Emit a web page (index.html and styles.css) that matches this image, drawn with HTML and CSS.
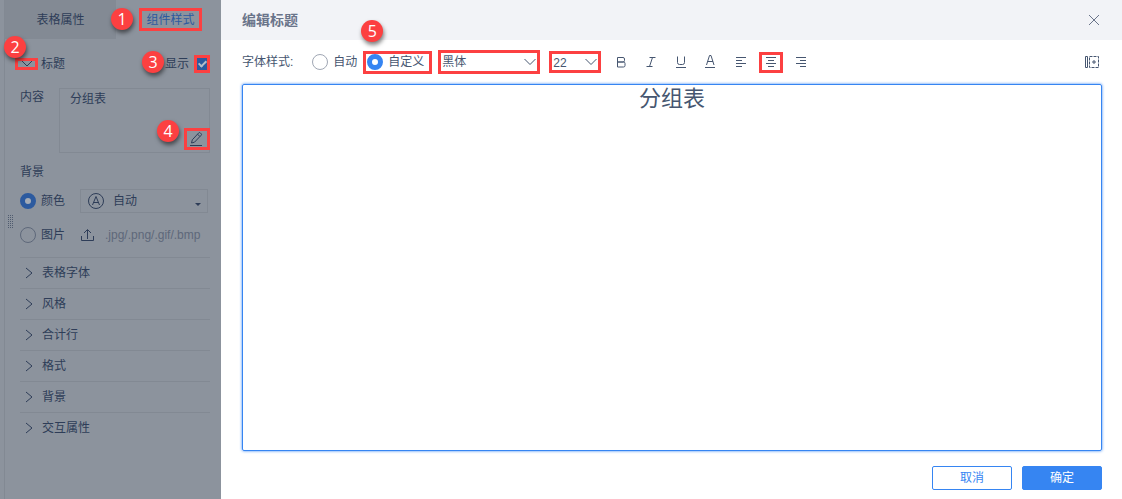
FILE: index.html
```html
<!DOCTYPE html>
<html lang="zh-CN">

<head>
  <meta charset="UTF-8">
  <meta name="viewport" content="width=device-width, initial-scale=1.0">
  <title>编辑标题</title>
  <link rel="stylesheet" href="styles.css">
</head>

<body>
  <aside class="sidebar">
    <nav class="tabs">
      <button class="tab" type="button">表格属性</button>
      <button class="tab active" type="button">
        <span class="mark mark-tab">组件样式<b class="badge badge-left">1</b></span>
      </button>
    </nav>
    <div class="grip"></div>

    <div class="section">
      <div class="section-head">
        <button class="mark mark-arrow" type="button" aria-label="标题">
          <svg width="17" height="6" viewBox="0 0 17 6"><path d="M4 0l5 5 5-5" /></svg>
          <b class="badge badge-top">2</b>
        </button>
        <span class="section-name">标题</span>
        <label for="showTitle">显示</label>
        <span class="mark mark-check">
          <input type="checkbox" id="showTitle" checked>
          <b class="badge badge-far">3</b>
        </span>
      </div>

      <div class="content-row">
        <label for="content">内容</label>
        <div class="content-box">
          <textarea id="content">分组表</textarea>
          <button class="mark mark-edit" type="button" aria-label="编辑">
            <svg width="16" height="16" viewBox="0 0 16 16"><path d="M2.500 12l.8-3.200L9.800 1.800a1 1 0 0 1 1.400 0l1 1a1 1 0 0 1 0 1.400L5.500 11.200zM8.600 3.200l2.300 2.300M1 14.500h12" /></svg>
            <b class="badge badge-edit">4</b>
          </button>
        </div>
      </div>

      <div class="sub-title">背景</div>
      <div class="bg-row">
        <label class="choice"><input type="radio" name="bg" checked>颜色</label>
        <div class="color-select">
          <svg class="auto-icon" width="16" height="16" viewBox="0 0 16 16"><circle cx="8" cy="8" r="7.500" /><path d="M4.500 12L8 3.500l3.500 8.500M5.800 9.500h4.400" /></svg>
          <select aria-label="颜色">
            <option>自动</option>
          </select>
          <i class="caret"></i>
        </div>
      </div>
      <div class="bg-row">
        <label class="choice"><input type="radio" name="bg">图片</label>
        <button class="upload" type="button">
          <svg width="14" height="14" viewBox="0 0 14 14"><path d="M7.500 11V2M4 5l3.500-3.500L11 5M1.500 8v4.500h12V8" /></svg>
          .jpg/.png/.gif/.bmp
        </button>
      </div>

      <ul class="groups">
        <li><button type="button"><svg width="8" height="12" viewBox="0 0 8 12"><path d="M1 1l6 5-6 5" /></svg>表格字体</button></li>
        <li><button type="button"><svg width="8" height="12" viewBox="0 0 8 12"><path d="M1 1l6 5-6 5" /></svg>风格</button></li>
        <li><button type="button"><svg width="8" height="12" viewBox="0 0 8 12"><path d="M1 1l6 5-6 5" /></svg>合计行</button></li>
        <li><button type="button"><svg width="8" height="12" viewBox="0 0 8 12"><path d="M1 1l6 5-6 5" /></svg>格式</button></li>
        <li><button type="button"><svg width="8" height="12" viewBox="0 0 8 12"><path d="M1 1l6 5-6 5" /></svg>背景</button></li>
        <li><button type="button"><svg width="8" height="12" viewBox="0 0 8 12"><path d="M1 1l6 5-6 5" /></svg>交互属性</button></li>
      </ul>
    </div>
  </aside>

  <main class="dialog">
    <header class="dialog-head">
      <h1>编辑标题</h1>
      <button type="button" aria-label="关闭">
        <svg width="16" height="16" viewBox="0 0 16 16"><path d="M3 3l10 10M13 3L3 13" /></svg>
      </button>
    </header>

    <div class="toolbar">
      <span class="toolbar-label">字体样式:</span>
      <label class="choice"><input type="radio" name="font">自动</label>
      <div class="mark mark-custom">
        <label class="choice"><input type="radio" name="font" checked>自定义</label>
        <b class="badge badge-above">5</b>
      </div>
      <div class="mark mark-font">
        <select aria-label="字体">
          <option>黑体</option>
        </select>
        <svg width="14" height="8" viewBox="0 0 14 8"><path d="M1.500 1L7 6.500 12.500 1" /></svg>
      </div>
      <div class="mark mark-size">
        <select aria-label="字号">
          <option>22</option>
        </select>
        <svg width="14" height="8" viewBox="0 0 14 8"><path d="M1.500 1L7 6.500 12.500 1" /></svg>
      </div>
      <div class="tools">
        <button type="button" aria-label="加粗">
          <svg width="16" height="16" viewBox="0 0 16 16"><path d="M4.500 3.500h5.500a1.500 1.500 0 0 1 1.500 1.500v1.500a1.500 1.500 0 0 1-1.500 1.500h-5.500zM4.500 8h6a1.500 1.500 0 0 1 1.500 1.500v2a1.500 1.500 0 0 1-1.500 1.500h-6z" /></svg>
        </button>
        <button type="button" aria-label="斜体">
          <svg width="16" height="16" viewBox="0 0 16 16"><path d="M6.500 3.500h6M3.500 12.500h6M9.500 3.500l-3 9" /></svg>
        </button>
        <button type="button" aria-label="下划线">
          <svg width="16" height="16" viewBox="0 0 16 16"><path d="M4.500 2.500v6a2 2 0 0 0 2 2h3a2 2 0 0 0 2-2v-6M3 13.500h10" /></svg>
        </button>
        <button type="button" aria-label="文字颜色">
          <svg width="16" height="16" viewBox="0 0 16 16"><path d="M3.500 11L6.500 1.500h1.500L11 11M4.500 7.500h5.500M2 13.500h10" /></svg>
        </button>
        <button type="button" aria-label="左对齐">
          <svg width="16" height="16" viewBox="0 0 16 16"><path d="M3 3.500h10M3 6.500h6M3 9.500h10M3 12.500h6" /></svg>
        </button>
        <button class="mark mark-center" type="button" aria-label="居中">
          <svg width="16" height="16" viewBox="0 0 16 16"><path d="M3 3.500h10M5 6.500h6M3 9.500h10M5 12.500h6" /></svg>
        </button>
        <button type="button" aria-label="右对齐">
          <svg width="16" height="16" viewBox="0 0 16 16"><path d="M3 3.500h10M7 6.500h6M3 9.500h10M7 12.500h6" /></svg>
        </button>
      </div>
      <button class="insert" type="button" aria-label="插入字段">
        <svg width="18" height="16" viewBox="0 0 18 16"><path d="M1.500 2.500h2v11h-2z" /><path d="M5.500 2.500h9v11h-9z" stroke-dasharray="3 1" /><path d="M8 8h4M10 6v4" /></svg>
      </button>
    </div>

    <textarea class="editor" aria-label="标题内容">分组表</textarea>

    <footer class="dialog-foot">
      <button class="btn" type="button">取消</button>
      <button class="btn primary" type="button">确定</button>
    </footer>
  </main>
</body>

</html>
```
FILE: styles.css
```css
* {
  box-sizing: border-box;
}

body {
  display: flex;
  min-height: 100vh;
  margin: 0;
  background: #fff;
  color: #465670;
  font-family: "Liberation Sans", "Noto Sans CJK SC", sans-serif;
  font-size: 12px;
  line-height: 18px;
}

button,
select,
textarea {
  margin: 0;
  padding: 0;
  border: none;
  background: none;
  color: inherit;
  font: inherit;
}

select {
  appearance: none;
  outline: none;
}

textarea {
  display: block;
  resize: none;
  outline: none;
}

svg {
  display: block;
  flex: none;
  fill: none;
  stroke: currentColor;
}

/* red frames and step numbers */
.mark {
  display: flex;
  position: relative;
  flex: none;
  align-items: center;
  justify-content: center;
  border: 3px solid #fc4041;
}

.badge {
  position: absolute;
  z-index: 1;
  width: 22px;
  height: 22px;
  border-radius: 50%;
  background: #fc4041;
  box-shadow: 1px 3px 4px rgba(0, 0, 0, 0.5);
  color: #fff;
  font-family: "Open Sans", sans-serif;
  font-size: 16px;
  font-weight: normal;
  line-height: 22px;
  text-align: center;
}

.badge-left {
  top: -3px;
  left: -31px;
}

.badge-top {
  top: -25px;
  left: -14px;
}

.badge-far {
  top: -7px;
  left: -55px;
}

.badge-edit {
  top: -11px;
  left: -30px;
}

.badge-above {
  top: -34px;
  left: -5px;
}

/* radios */
.choice {
  display: flex;
  flex: none;
  align-items: center;
  gap: 5px;
}

.choice input {
  appearance: none;
  width: 16px;
  height: 16px;
  margin: 0;
  border: 1px solid #a0a7b4;
  border-radius: 50%;
}

.choice input:checked {
  border: 5px solid #3685f2;
  background: #fff;
}

/* sidebar */
.sidebar {
  position: relative;
  flex: none;
  width: 221px;
  padding-left: 5px;
  background: linear-gradient(90deg, #8c939d 4px, #828993 4px, #828993 5px, #8c939d 5px);
  color: #2e3d58;
}

.tabs {
  display: flex;
  height: 39px;
}

.tab {
  display: flex;
  flex: 1;
  align-items: center;
  justify-content: center;
  background: #838a94;
}

.tab.active {
  flex: none;
  justify-content: flex-start;
  width: 105px;
  padding-left: 23px;
  background: none;
  color: #2c5a9f;
}

.mark-tab {
  width: 63px;
  height: 23px;
}

.grip {
  position: absolute;
  top: 215px;
  left: 8px;
  width: 5px;
  height: 13px;
  background: conic-gradient(#4f5b6f 25%, transparent 0) -1px 0 / 2px 2px;
}

.section {
  padding: 0 11px 0 15px;
}

.section-head {
  display: flex;
  align-items: center;
  gap: 5px;
  height: 49px;
}

.section-name {
  flex: 1;
}

.mark-arrow {
  width: 23px;
  height: 12px;
  margin: 0 -2px 0 -5px;
}

.mark-check {
  width: 16px;
  height: 18px;
}

.mark-check input {
  appearance: none;
  position: relative;
  width: 10px;
  height: 12px;
  margin: 0;
  background: #2c5a9f;
}

.mark-check input::after {
  content: "";
  position: absolute;
  top: 1px;
  left: 3px;
  width: 3px;
  height: 6px;
  border: solid #b4bdc8;
  border-width: 0 2px 2px 0;
  transform: rotate(45deg);
}

.content-row {
  display: flex;
  justify-content: space-between;
  margin-bottom: 10px;
}

.content-box {
  position: relative;
  width: 151px;
  border: 1px solid #828993;
}

.content-box textarea {
  width: 100%;
  height: 63px;
  padding: 1px 10px;
}

.mark-edit {
  position: absolute;
  right: -1px;
  bottom: 2px;
  width: 26px;
  height: 22px;
}

.sub-title {
  margin-bottom: 8px;
}

.bg-row {
  display: flex;
  align-items: center;
  gap: 15px;
  height: 24px;
  margin-bottom: 10px;
}

.sidebar .choice input {
  border-color: #5e687a;
}

.sidebar .choice input:checked {
  border-color: #2c5a9f;
  background: #a4abb6;
}

.color-select {
  display: flex;
  position: relative;
  flex: 1;
  align-items: center;
  height: 24px;
  margin-right: 2px;
  border: 1px solid #828993;
}

.color-select select {
  width: 100%;
  height: 100%;
  padding-left: 32px;
}

.auto-icon {
  position: absolute;
  left: 7px;
  pointer-events: none;
}

.caret {
  position: absolute;
  right: 6px;
  bottom: 6px;
  border: solid transparent;
  border-width: 3px 3px 0;
  border-top-color: #2e3d58;
  pointer-events: none;
}

.upload {
  display: flex;
  align-items: center;
  gap: 11px;
  color: #5e687a;
}

.upload svg {
  color: #2e3d58;
}

.groups {
  margin: 0;
  padding: 0;
  list-style: none;
}

.groups li {
  border-top: 1px solid #828993;
}

.groups button {
  display: flex;
  align-items: center;
  gap: 9px;
  width: 100%;
  height: 30px;
  padding-left: 5px;
}

/* dialog */
.dialog {
  display: flex;
  flex: 1;
  flex-direction: column;
}

.dialog-head {
  display: flex;
  align-items: center;
  justify-content: space-between;
  height: 40px;
  padding: 0 20px 0 21px;
  background: #f2f3f7;
  color: #6a748a;
}

.dialog-head h1 {
  margin: 0;
  font-size: 14px;
  line-height: 20px;
}

.toolbar {
  display: flex;
  align-items: center;
  height: 44px;
  padding: 0 20px 0 21px;
}

.toolbar-label {
  margin-right: 19px;
}

.mark-custom {
  justify-content: flex-start;
  width: 69px;
  height: 23px;
  margin: 0 6px;
  padding-left: 1px;
}

.mark-font {
  width: 102px;
  height: 24px;
  margin-right: 9px;
}

.mark-size {
  width: 52px;
  height: 22px;
}

.mark select {
  width: 100%;
  height: 100%;
  padding-left: 1px;
}

.mark select + svg {
  position: absolute;
  right: 0;
  pointer-events: none;
}

.tools {
  display: flex;
  align-items: center;
  gap: 6px;
  margin-left: 8px;
}

.tools button {
  display: flex;
  align-items: center;
  justify-content: center;
  width: 24px;
  height: 21px;
}

.insert {
  margin-left: auto;
}

.editor {
  flex: 1;
  min-height: 200px;
  margin: 0 20px 0 21px;
  border: 1px solid #3685f2;
  border-radius: 2px;
  box-shadow: 0 0 3px #3685f2;
  font-size: 22px;
  line-height: 28px;
  text-align: center;
}

.dialog-foot {
  display: flex;
  justify-content: flex-end;
  gap: 10px;
  padding: 15px 20px 9px;
}

.btn {
  width: 80px;
  height: 24px;
  border: 1px solid #3685f2;
  border-radius: 2px;
  color: #3685f2;
}

.btn.primary {
  background: #3685f2;
  color: #fff;
}
```
